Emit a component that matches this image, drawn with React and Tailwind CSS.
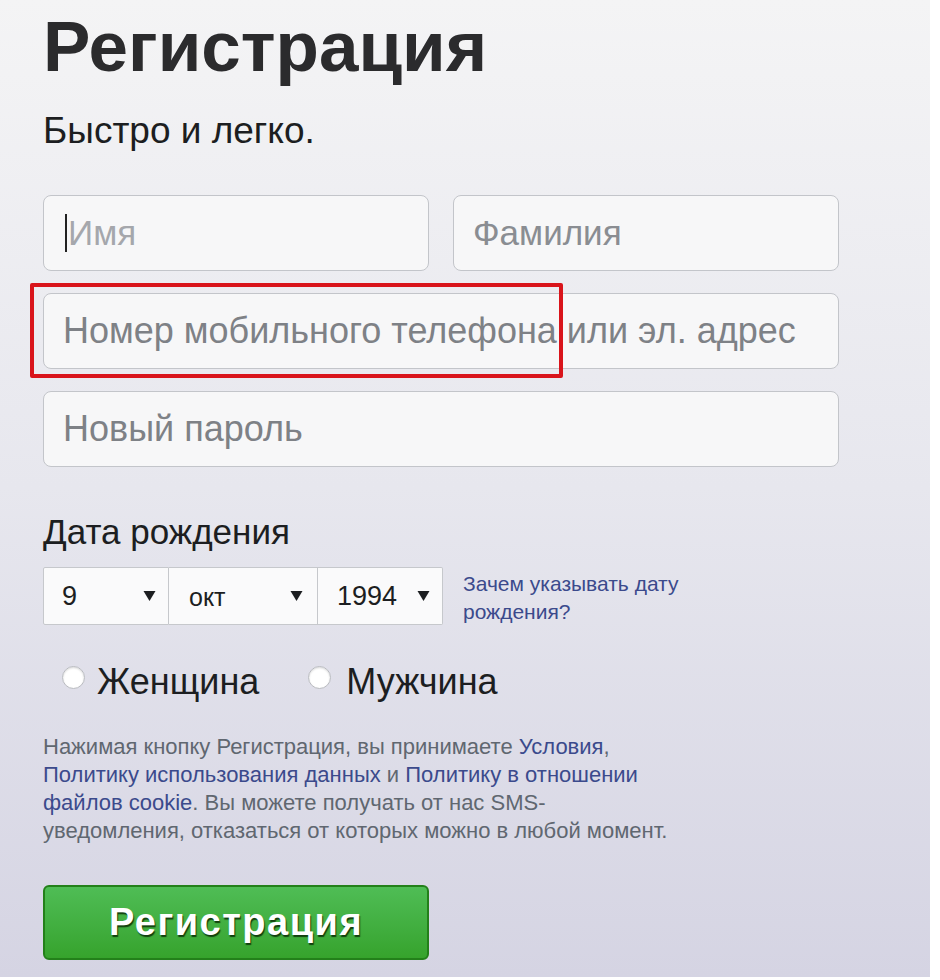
export default function App() {
  const font = { fontFamily: '"Liberation Sans", Arial, sans-serif' };

  const Arrow = () => (
    <svg width="13" height="12" viewBox="0 0 13 12" className="shrink-0">
      <path d="M0.5 1 L12.5 1 L6.5 11 Z" fill="#1c1e21" />
    </svg>
  );

  return (
    <div className="w-[940px] h-[980px] flex bg-white overflow-hidden" style={font}>
      <div className="w-[930px] h-[977px] bg-linear-to-b from-[#f4f4f5] via-[#e7e7ee] to-[#d5d4e3] pl-[43px]">
        <h1 className="mt-[11px] text-[71px] leading-none font-bold text-[#2b2b2d]">Регистрация</h1>
        <div className="mt-[30px] text-[37px] leading-none text-[#1c1e21]">Быстро и легко.</div>

        <div className="mt-[46px] w-[796px] flex flex-col gap-[22px]">
          <div className="flex gap-[24px]">
            <div className="w-[386px] h-[76px] rounded-[8px] border border-[#c3c5ca] bg-[#f7f7f8] flex items-center pl-[21px] text-[35px] text-[#a5a7ac]">
              <span className="w-[2px] h-[38px] bg-[#222] mr-[1px]"></span>
              Имя
            </div>
            <div className="w-[386px] h-[76px] rounded-[8px] border border-[#c3c5ca] bg-[#f7f7f8] flex items-center pl-[19px] text-[35px] text-[#8a8d92]">
              Фамилия
            </div>
          </div>
          <div className="relative">
            <div className="h-[76px] rounded-[8px] border border-[#c3c5ca] bg-[#f7f7f8] flex items-center pl-[19px] text-[36px] text-[#7e8186] whitespace-nowrap">
              Номер мобильного телефона или эл. адрес
            </div>
            <div className="absolute left-[-13px] top-[-10px] w-[533px] h-[95px] border-[4px] border-[#d9141b] rounded-[2px]"></div>
          </div>
          <div className="h-[76px] rounded-[8px] border border-[#c3c5ca] bg-[#f7f7f8] flex items-center pl-[19px] text-[36px] text-[#7e8186]">
            Новый пароль
          </div>
        </div>

        <div className="mt-[47px] text-[35px] leading-none text-[#1c1e21]">Дата рождения</div>

        <div className="mt-[18px] flex items-start">
          <div className="flex">
            <div className="w-[126px] h-[58px] border border-[#c6c8cc] rounded-l-[2px] bg-[#fafafb] flex items-center justify-between pl-[18px] pr-[12px] text-[27px] text-[#1c1e21]">
              <span>9</span>
              <Arrow />
            </div>
            <div className="w-[149px] h-[58px] border border-l-0 border-[#c6c8cc] bg-[#fafafb] flex items-center justify-between pl-[20px] pr-[14px] text-[25px] text-[#1c1e21]">
              <span className="mt-[4px]">окт</span>
              <Arrow />
            </div>
            <div className="w-[125px] h-[58px] border border-l-0 border-[#c6c8cc] rounded-r-[2px] bg-[#fafafb] flex items-center justify-between pl-[19px] pr-[12px] text-[27px] text-[#1c1e21]">
              <span>1994</span>
              <Arrow />
            </div>
          </div>
          <div className="ml-[20px] mt-[3px] text-[21px] leading-[28px] text-[#3b4a8c]">
            Зачем указывать дату
            <br />
            рождения?
          </div>
        </div>

        <div className="mt-[38px] flex items-center pl-[19px]">
          <span className="w-[23px] h-[23px] rounded-full border border-[#b9bbc0] bg-white shadow-[inset_0_1px_2px_rgba(0,0,0,0.15)] mb-[10px]"></span>
          <span className="ml-[12px] text-[36px] leading-none text-[#1c1e21]">Женщина</span>
          <span className="ml-[49px] w-[23px] h-[23px] rounded-full border border-[#b9bbc0] bg-white shadow-[inset_0_1px_2px_rgba(0,0,0,0.15)] mb-[10px]"></span>
          <span className="ml-[15px] text-[36px] leading-none text-[#1c1e21]">Мужчина</span>
        </div>

        <div className="mt-[33px] text-[22px] leading-[28px] text-[#606770] whitespace-nowrap">
          Нажимая кнопку Регистрация, вы принимаете <span className="text-[#3b4a8c]">Условия</span>,
          <br />
          <span className="text-[#3b4a8c]">Политику использования данных</span> и{" "}
          <span className="text-[#3b4a8c]">Политику в отношении</span>
          <br />
          <span className="text-[#3b4a8c]">файлов cookie</span>. Вы можете получать от нас SMS-
          <br />
          уведомления, отказаться от которых можно в любой момент.
        </div>

        <button className="mt-[40px] w-[386px] h-[75px] rounded-[6px] border-2 border-[#23801a] bg-linear-to-b from-[#4fbd55] to-[#36a32c] flex items-center justify-center text-[38px] font-bold text-white tracking-[1.5px] [text-shadow:1px_2px_1px_#12400e]">
          Регистрация
        </button>
      </div>
    </div>
  );
}
